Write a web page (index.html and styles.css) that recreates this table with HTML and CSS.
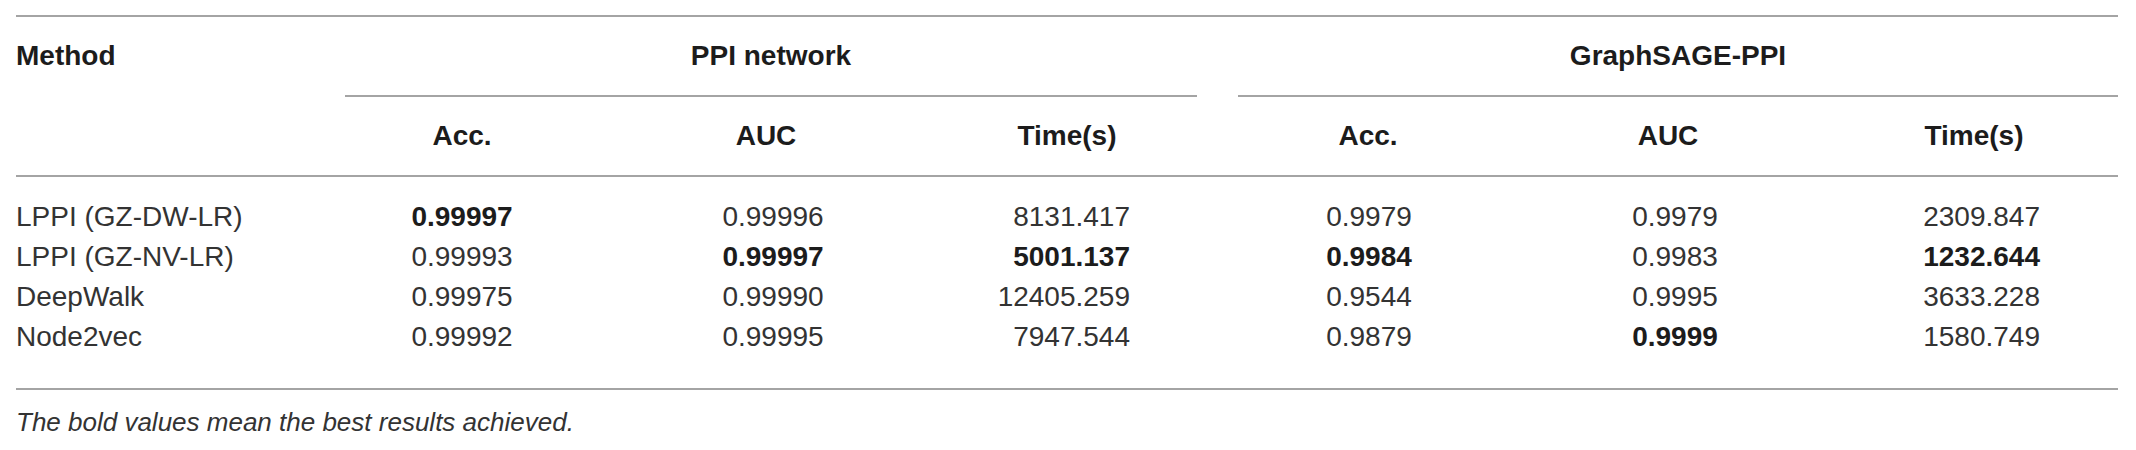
FILE: index.html
```html
<!DOCTYPE html>
<html lang="en">
<head>
<meta charset="utf-8">
<title>Table</title>
<link rel="stylesheet" href="styles.css">
</head>
<body>
<div class="page">
  <div class="table">
    <div class="thead">
      <div class="th method">Method</div>
      <div class="th group g1">PPI network</div>
      <div class="th group g2">GraphSAGE-PPI</div>
      <div class="th blank"></div>
      <div class="th h-acc1">Acc.</div>
      <div class="th h-auc1">AUC</div>
      <div class="th h-time1">Time(s)</div>
      <div class="th h-acc2">Acc.</div>
      <div class="th h-auc2">AUC</div>
      <div class="th h-time2">Time(s)</div>
    </div>
    <div class="tbody">
      <div class="td name">LPPI (GZ-DW-LR)</div>
      <div class="td acc1 best">0.99997</div>
      <div class="td auc1">0.99996</div>
      <div class="td time1">8131.417</div>
      <div class="td acc2">0.9979</div>
      <div class="td auc2">0.9979</div>
      <div class="td time2">2309.847</div>

      <div class="td name">LPPI (GZ-NV-LR)</div>
      <div class="td acc1">0.99993</div>
      <div class="td auc1 best">0.99997</div>
      <div class="td time1 best">5001.137</div>
      <div class="td acc2 best">0.9984</div>
      <div class="td auc2">0.9983</div>
      <div class="td time2 best">1232.644</div>

      <div class="td name">DeepWalk</div>
      <div class="td acc1">0.99975</div>
      <div class="td auc1">0.99990</div>
      <div class="td time1">12405.259</div>
      <div class="td acc2">0.9544</div>
      <div class="td auc2">0.9995</div>
      <div class="td time2">3633.228</div>

      <div class="td name">Node2vec</div>
      <div class="td acc1">0.99992</div>
      <div class="td auc1">0.99995</div>
      <div class="td time1">7947.544</div>
      <div class="td acc2">0.9879</div>
      <div class="td auc2 best">0.9999</div>
      <div class="td time2">1580.749</div>
    </div>
  </div>
  <p class="caption">The bold values mean the best results achieved.</p>
</div>
</body>
</html>
```

FILE: styles.css
```css
html, body {
  margin: 0;
  padding: 0;
  background: #ffffff;
}

body {
  font-family: "Liberation Sans", Arial, Helvetica, sans-serif;
  color: #333333;
}

.page {
  padding: 15px 18px 0 16px;
}

.table {
  width: 2102px;
}

.thead,
.tbody {
  display: grid;
  grid-template-columns: 329px 234px 382px 236px 301px 340px 280px;
}

.thead {
  border-top: 2px solid #a4a4a4;
  border-bottom: 2px solid #a4a4a4;
}

.tbody {
  padding: 20px 0 31px;
  border-bottom: 2px solid #a4a4a4;
}

.th {
  font-size: 28px;
  font-weight: 700;
  line-height: 40px;
  padding: 19px 0;
  color: #1c1c1c;
  text-align: center;
}

.method {
  grid-column: 1;
  grid-row: 1;
  text-align: left;
}

.group {
  border-bottom: 2px solid #a4a4a4;
}

.g1 {
  grid-column: 2 / 5;
  grid-row: 1;
}

.g2 {
  grid-column: 5 / 8;
  grid-row: 1;
  margin-left: 41px;
}

.blank {
  grid-column: 1;
  grid-row: 2;
}

.h-auc1 {
  padding-right: 8px;
}

.h-time1 {
  padding-right: 24px;
}

.h-acc2 {
  padding-left: 41px;
}

.h-time2 {
  padding-right: 8px;
}

.td {
  font-size: 28px;
  line-height: 40px;
  text-align: center;
  white-space: nowrap;
}

.td.name {
  text-align: left;
}

.td.auc1 {
  padding-left: 6px;
}

.td.time1 {
  text-align: right;
  padding-right: 67px;
}

.td.acc2 {
  padding-left: 43px;
}

.td.auc2 {
  padding-left: 14px;
}

.td.time2 {
  text-align: right;
  padding-right: 78px;
}

.best {
  font-weight: 700;
  color: #1c1c1c;
}

.caption {
  margin: 15px 0 0;
  font-size: 26px;
  line-height: 34px;
  font-style: italic;
  color: #333333;
}
```
